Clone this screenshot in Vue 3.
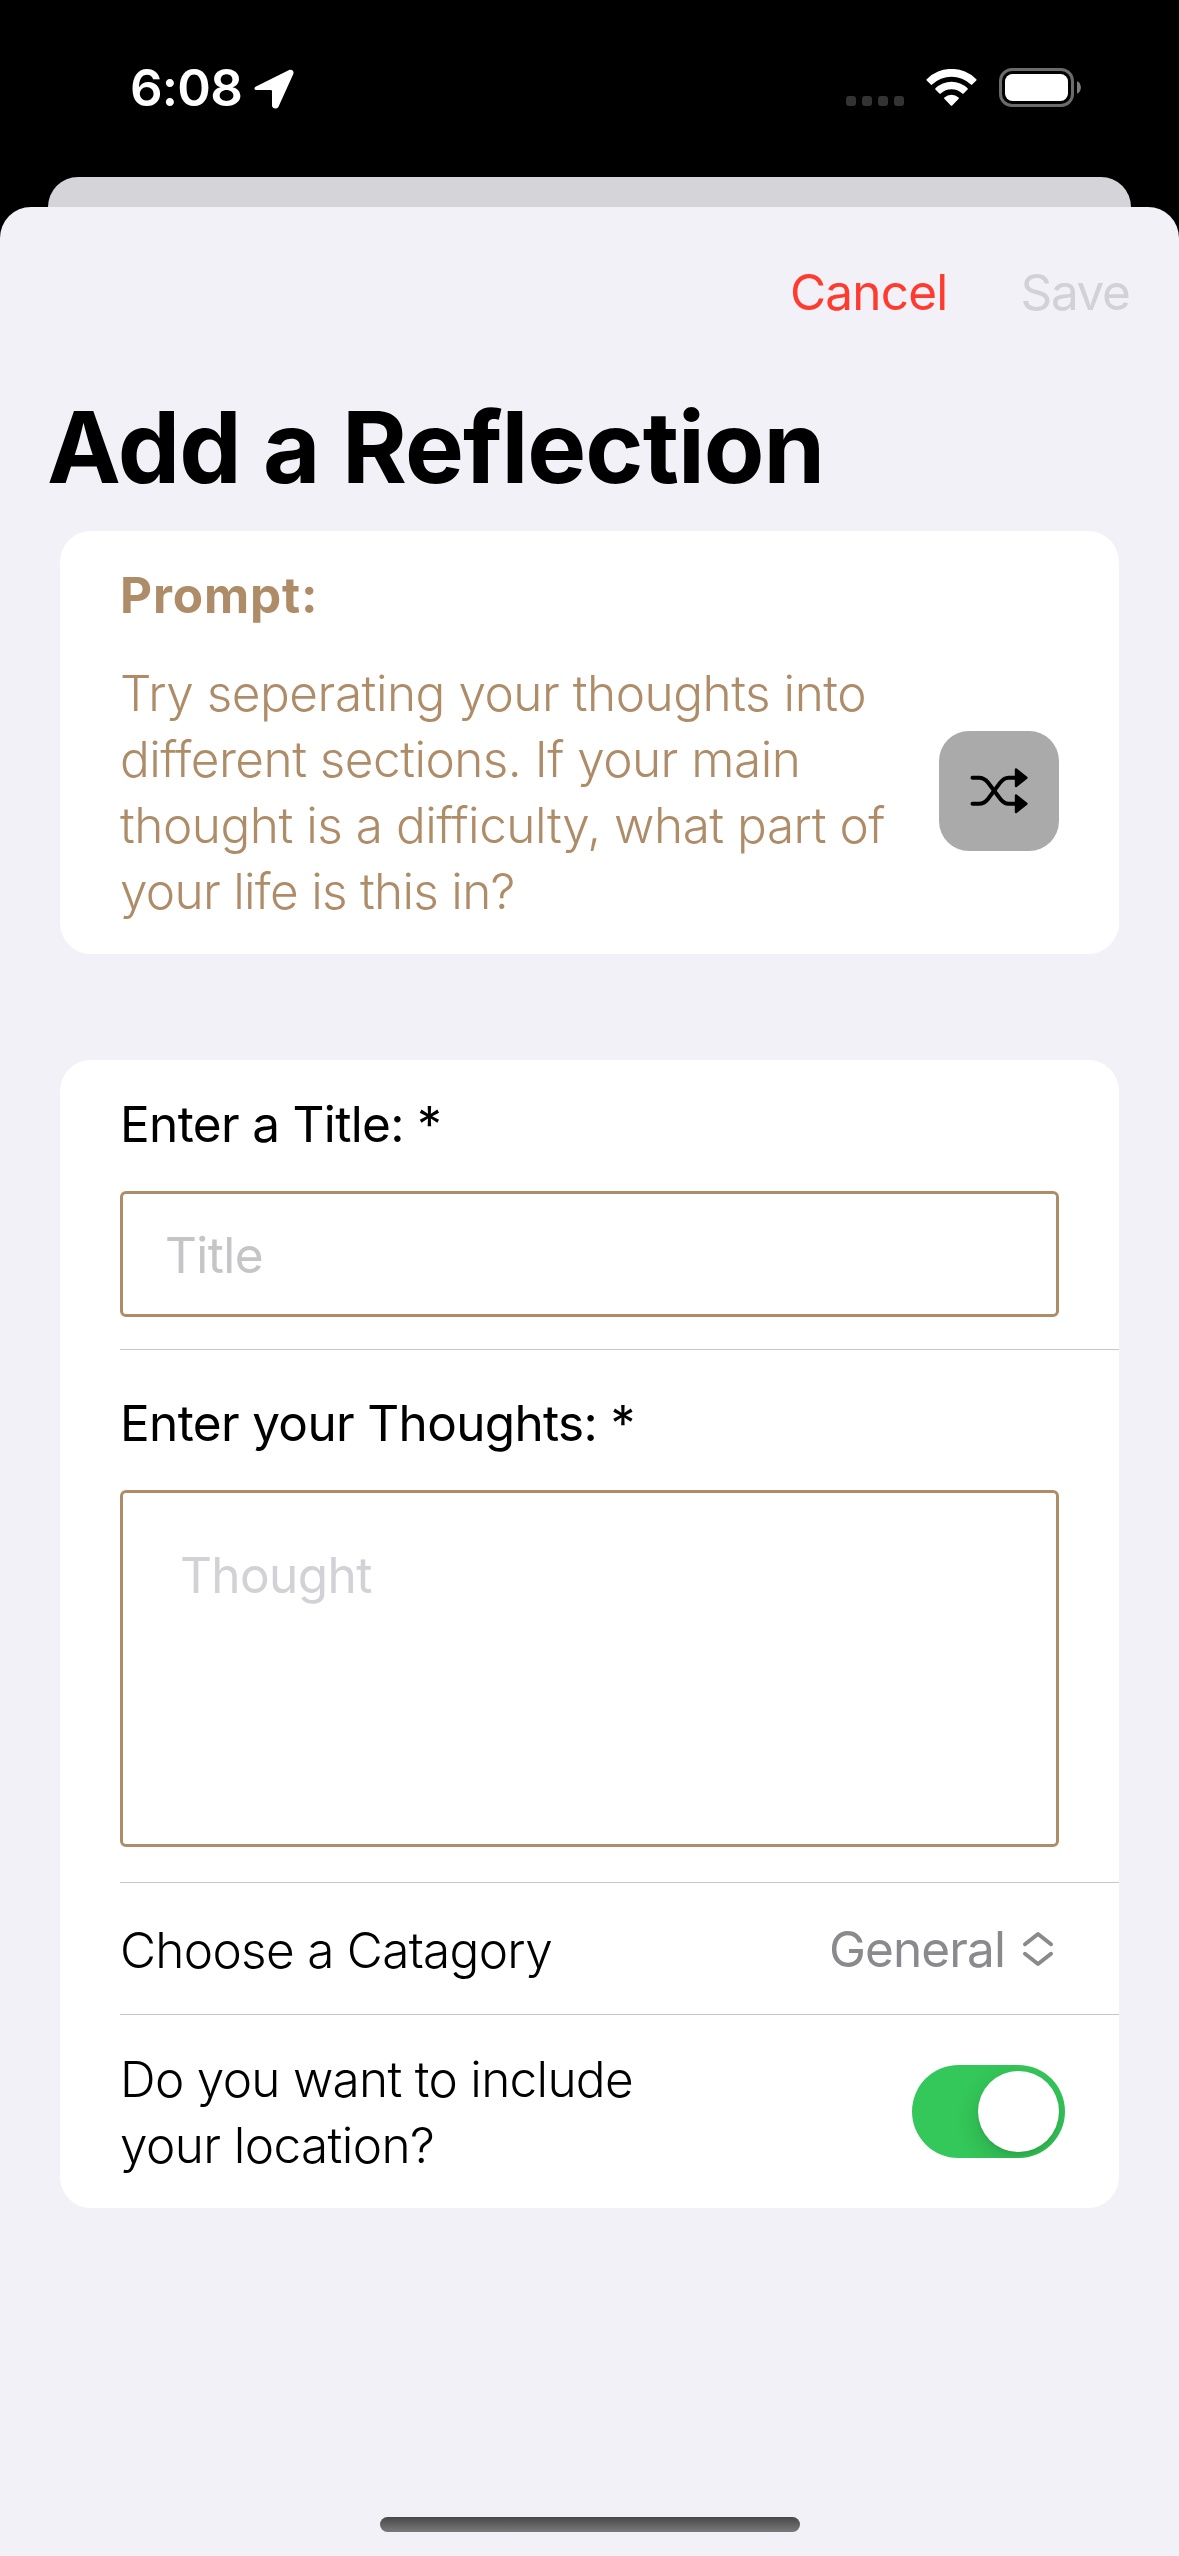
<script setup>
import { ref } from 'vue'

const promptLines = [
  'Try seperating your thoughts into',
  'different sections. If your main',
  'thought is a difficulty, what part of',
  'your life is this in?',
]
const title = ref('')
const thought = ref('')
const includeLocation = ref(true)
</script>

<template>
  <div class="screen">
    <header class="status">
      <div class="status-left">
        <span class="time">6:08</span>
        <svg class="arrow" width="40" height="40" viewBox="0 0 40 40" fill="#fff">
          <path d="M2.5 17.2 34.6 1.3C37.6-.1 40.4 2 39.3 5.1L24.6 37.4C23.2 40.6 18 39.9 18 36.4V22.2Q18 21.1 16.9 21.1H3.6C-.2 21.1-.6 18.6 2.5 17.2Z" />
        </svg>
      </div>
      <div class="status-right">
        <div class="dots"><i v-for="n in 4" :key="n"></i></div>
        <svg class="wifi" width="51" height="38" viewBox="0 0 51 38" fill="#fff">
          <path d="M.7 10.2A35 35 0 0 1 50.3 10.2Q50.9 10.8 50.3 11.5L46.2 15.6Q45.6 16.2 44.9 15.6A28 28 0 0 0 6.1 15.6Q5.4 16.2 4.8 15.6L.7 11.5Q.1 10.8.7 10.2Z" />
          <path d="M9.4 19.3A23 23 0 0 1 41.6 19.3Q42.1 20 41.6 20.6L37.6 24.6Q37 25.2 36.3 24.6A15.6 15.6 0 0 0 14.7 24.6Q14 25.2 13.4 24.6L9.4 20.6Q8.9 20 9.4 19.3Z" />
          <path d="M18.4 28.5A10.6 10.6 0 0 1 32.6 28.5Q33.3 29.2 32.7 29.8L26.2 36.5Q25.5 37.2 24.8 36.5L18.3 29.8Q17.7 29.2 18.4 28.5Z" />
        </svg>
        <svg class="battery" width="83" height="39" viewBox="0 0 83 39">
          <rect x="1.5" y="1.5" width="72" height="36" rx="11.5" fill="none" stroke="#6b6b6b" stroke-width="3" />
          <rect x="6" y="6" width="63" height="27" rx="7.5" fill="#fff" />
          <path d="M78 13.2C83.2 15 83.2 24 78 25.8Z" fill="#7d7d7d" />
        </svg>
      </div>
    </header>

    <div class="back-sheet"></div>

    <main class="sheet">
      <nav class="toolbar">
        <button class="cancel">Cancel</button>
        <button class="save" disabled>Save</button>
      </nav>

      <h1>Add a Reflection</h1>

      <section class="card prompt">
        <h2>Prompt:</h2>
        <div class="prompt-row">
          <p>
            <span v-for="line in promptLines" :key="line">{{ line }}</span>
          </p>
          <button class="shuffle" aria-label="Shuffle">
            <svg width="60" height="46" viewBox="0 0 60 46">
              <g fill="none" stroke="#000" stroke-width="4" stroke-linecap="round">
                <path d="M3.5 9.7H10C14.5 9.7 16.8 11.8 19 14.5L31 30.5C33.3 33.6 35.6 35.7 39.5 35.7H49" />
                <path d="M3.5 35.7H10C14.5 35.7 16.8 33.6 19 30.9L31 14.9C33.3 11.8 35.6 9.7 39.5 9.7H49" />
              </g>
              <g stroke="#000" stroke-width="2.4" stroke-linejoin="round">
                <path d="M47 1.4 57.4 9.7 47 18Z" />
                <path d="M47 27.4 57.4 35.7 47 44Z" />
              </g>
            </svg>
          </button>
        </div>
      </section>

      <section class="card form">
        <div class="field title-field">
          <label for="title">Enter a Title: *</label>
          <input id="title" v-model="title" class="box" placeholder="Title" />
        </div>
        <div class="field thought-field">
          <label for="thought">Enter your Thoughts: *</label>
          <textarea id="thought" v-model="thought" class="box" placeholder="Thought"></textarea>
        </div>
        <div class="field category">
          <span class="category-label">Choose a Catagory</span>
          <span class="picker">
            <span>General</span>
            <svg width="32" height="38" viewBox="0 0 32 38" fill="none" stroke="#8a8a8e" stroke-width="4" stroke-linecap="round" stroke-linejoin="round">
              <path d="M3 14.2 16 4 29 14.2M3 23.8 16 34 29 23.8" />
            </svg>
          </span>
        </div>
        <div class="field location">
          <p><span>Do you want to include</span><span>your location?</span></p>
          <button
            class="switch"
            :class="{ on: includeLocation }"
            role="switch"
            :aria-checked="includeLocation"
            @click="includeLocation = !includeLocation"
          ><i></i></button>
        </div>
      </section>

      <div class="home"></div>
    </main>
  </div>
</template>

<style>
body {
  margin: 0;
  background: #000;
}
</style>

<style scoped>
.screen {
  width: 1179px;
  height: 2556px;
  background: #000;
  display: flex;
  flex-direction: column;
  overflow: hidden;
  font-family: Inter, "Liberation Sans", sans-serif;
  font-size: 49.5px;
  line-height: 66px;
  color: #000;
}
button,
input,
textarea {
  font: inherit;
  padding: 0;
  border: 0;
  background: none;
  box-sizing: border-box;
}
h1,
h2,
p {
  margin: 0;
}
svg {
  display: block;
}

/* status bar */
.status {
  height: 177px;
  box-sizing: border-box;
  padding: 55px 97px 0 130px;
  display: flex;
  justify-content: space-between;
  align-items: flex-start;
  color: #fff;
}
.status-left,
.status-right {
  display: flex;
  align-items: flex-start;
}
.time {
  width: 124px;
  font-size: 51px;
  font-weight: 600;
  letter-spacing: -0.8px;
}
.arrow {
  margin-top: 14px;
}
.dots {
  display: flex;
  gap: 6px;
  margin: 41px 22px 0 0;
}
.dots i {
  width: 10px;
  height: 10px;
  border-radius: 3px;
  background: #333;
}
.wifi {
  margin: 14px 22px 0 0;
}
.battery {
  margin-top: 13px;
}

/* sheets */
.back-sheet {
  height: 30px;
  margin: 0 48px;
  border-radius: 30px 30px 0 0;
  background: #d5d4d9;
}
.sheet {
  flex: 1;
  display: flex;
  flex-direction: column;
  border-radius: 31px 31px 0 0;
  background: #f2f1f7;
}
.toolbar {
  display: flex;
  justify-content: flex-end;
  height: 118px;
  padding: 52px 49.5px 0 0;
  box-sizing: border-box;
}
.toolbar button {
  height: 66px;
}
.cancel {
  color: #ff3b30;
  letter-spacing: -0.8px;
  margin-right: 73px;
}
.save {
  color: #d1d1d6;
  letter-spacing: -1.4px;
}
h1 {
  margin: 62px 0 0 47px;
  height: 144px;
  font-size: 99px;
  font-weight: 700;
  line-height: 120px;
  letter-spacing: -0.95px;
}

/* cards */
.card {
  margin: 0 60px;
  border-radius: 31px;
  background: #fff;
}
.prompt {
  height: 423px;
  box-sizing: border-box;
  padding: 31px 60px 30px;
  color: #af8c68;
}
h2 {
  font-size: 49.5px;
  font-weight: 700;
  letter-spacing: 0.85px;
}
.prompt-row {
  display: flex;
  justify-content: space-between;
  margin-top: 32px;
  font-weight: 300;
}
.prompt-row span {
  display: block;
  white-space: nowrap;
  letter-spacing: -0.48px;
}
.prompt-row span:nth-child(2) {
  letter-spacing: -0.52px;
}
.prompt-row span:nth-child(4) {
  letter-spacing: -0.72px;
}
.shuffle {
  width: 120px;
  height: 120px;
  margin-top: 71px;
  border-radius: 30px;
  background: #aaa;
  display: flex;
  align-items: center;
  justify-content: center;
}
.form {
  margin-top: 106px;
  padding-left: 60px;
}
.field {
  box-sizing: border-box;
  padding-right: 60px;
  border-bottom: 1px solid #c6c6c8;
}
.field:last-child {
  border-bottom: 0;
}
.field label {
  display: block;
  letter-spacing: -0.66px;
}
.box {
  display: block;
  width: 939px;
  margin-top: 34px;
  border: 3px solid #af8c68;
  border-radius: 6px;
  outline: 0;
  resize: none;
  overflow: hidden;
}
.title-field {
  height: 290px;
  padding-top: 31px;
}
.title-field .box {
  height: 126px;
  padding: 1px 42px 0;
  letter-spacing: -0.6px;
}
.thought-field {
  height: 533px;
  padding-top: 40px;
}
.thought-field .box {
  height: 357px;
  padding: 49px 57px;
  letter-spacing: -0.6px;
}
.title-field .box::placeholder {
  color: #c5c5c7;
  opacity: 1;
}
.thought-field .box::placeholder {
  color: #d1d1d6;
  opacity: 1;
}
.category {
  height: 132px;
  display: flex;
  justify-content: space-between;
  padding-top: 33px;
}
.category-label {
  height: 66px;
  margin-top: 1px;
  font-weight: 300;
  letter-spacing: -0.7px;
}
.picker {
  display: flex;
  height: 66px;
  padding-right: 5px;
  gap: 17px;
  color: #8a8a8e;
  letter-spacing: -0.9px;
}
.picker svg {
  margin-top: 14px;
}
.location {
  height: 193px;
  display: flex;
  justify-content: space-between;
  padding: 31px 54px 0 0;
  font-weight: 300;
}
.location span {
  display: block;
  letter-spacing: -0.7px;
}
.location span:last-child {
  letter-spacing: -0.6px;
}
.switch {
  width: 153px;
  height: 93px;
  margin-top: 19px;
  padding: 6px;
  border-radius: 47px;
  background: #e9e9ea;
  display: flex;
  overflow: hidden;
}
.switch.on {
  justify-content: flex-end;
  background: #34c759;
}
.switch i {
  width: 81px;
  height: 81px;
  border-radius: 50%;
  background: #fff;
  box-shadow: 0 9px 24px rgba(0, 0, 0, 0.16), 0 3px 3px rgba(0, 0, 0, 0.05);
}
.home {
  width: 420px;
  height: 15px;
  margin: auto auto 24px;
  border-radius: 8px;
  background: linear-gradient(#474747, #7a7a7c);
}
</style>
